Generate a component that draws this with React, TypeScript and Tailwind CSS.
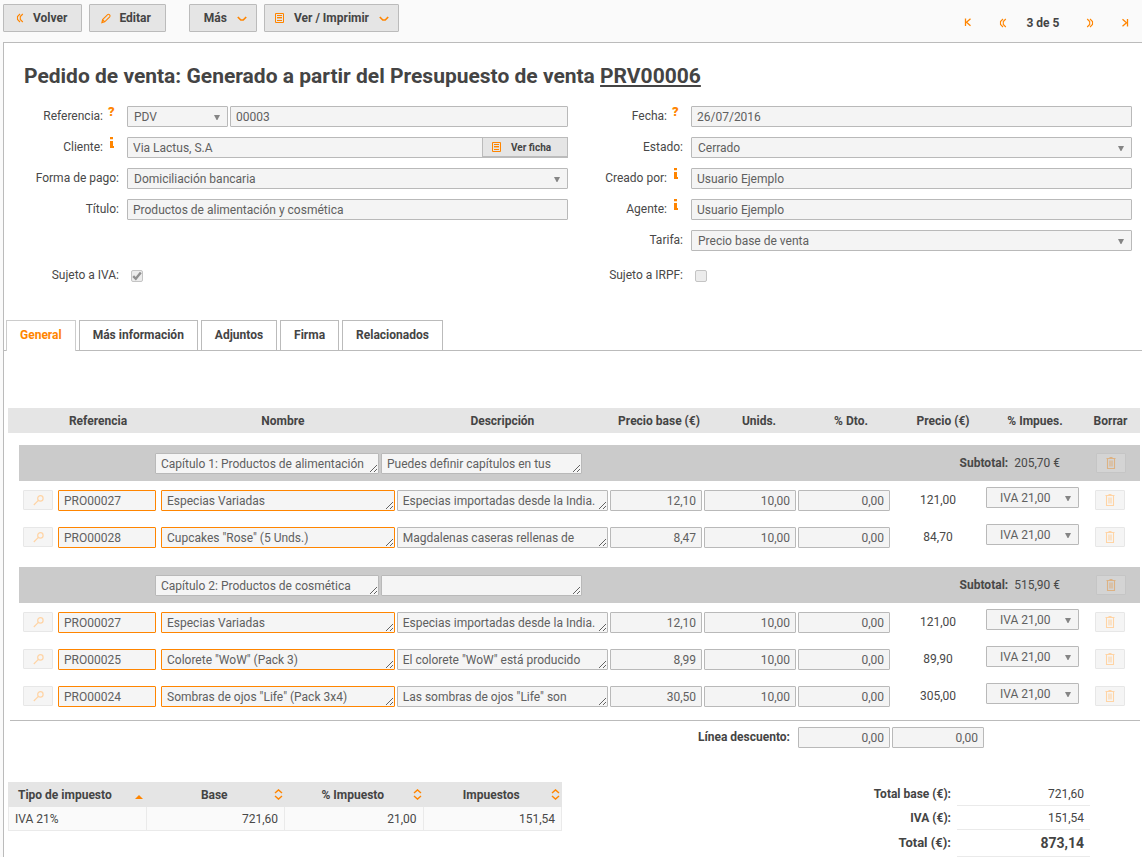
import type { ReactNode } from 'react';

const field =
  'h-[21px] min-w-0 rounded-[1px] border border-[#b9b9b9] bg-[#f4f4f4] text-[12px] leading-[19px] text-[#606060] outline-none';
const area =
  'block h-[21px] min-h-[21px] overflow-hidden rounded-[1px] border bg-[#f5f5f5] px-[5px] pt-px pb-0 text-[12px] leading-[19px] whitespace-nowrap text-[#606060] outline-none resize';
const toolButton =
  'flex h-7 items-center rounded-[1px] border border-[#bbb] bg-[#e5e5e5] text-[12px] font-bold text-[#444]';

function DoubleChevron({ flip = false }: { flip?: boolean }) {
  return (
    <svg
      width="8"
      height="10"
      viewBox="0 0 8 10"
      className={flip ? 'rotate-180' : ''}
      fill="none"
      stroke="#ff8500"
      strokeWidth="1.1"
    >
      <path d="M4 1 L1.5 3.5 V6.5 L4 9 M6.8 1 L4.3 3.5 V6.5 L6.8 9" />
    </svg>
  );
}

function EndChevron({ flip = false }: { flip?: boolean }) {
  return (
    <svg
      width="8"
      height="9"
      viewBox="0 0 8 9"
      className={flip ? 'rotate-180' : ''}
      fill="none"
      stroke="#ff8500"
      strokeWidth="1.3"
    >
      <path d="M1.5 0.5 V8 M6.5 0.8 L2.5 4.3 L6.5 7.8" />
    </svg>
  );
}

function ChevronDown() {
  return (
    <svg width="10" height="6" viewBox="0 0 10 6" fill="none" stroke="#ff8500" strokeWidth="1.7" className="mt-0.5">
      <path d="M0.8 1 L3.8 4 H6.2 L9.2 1" />
    </svg>
  );
}

function Pencil() {
  return (
    <svg width="10" height="11" viewBox="0 0 10 11" fill="none" stroke="#ff8500" strokeWidth="1.1">
      <path d="M0.9 9.6 L1.6 6.6 L6.6 1.6 Q7.6 0.9 8.6 1.8 Q9.4 2.8 8.7 3.8 L3.7 8.8 Z M1.8 6.8 L3.6 8.6" />
    </svg>
  );
}

function Sheet() {
  return (
    <svg width="9" height="10" viewBox="0 0 9 10" fill="none" stroke="#ff8500">
      <path d="M0.5 0.5 H8.5 V9.5 H0.5 Z M2 2.5 H7 M2 4.5 H7 M2 7.5 H7" />
      <path d="M2 5.5 H7" strokeOpacity="0.4" />
    </svg>
  );
}

function Magnifier() {
  return (
    <svg width="11" height="11" viewBox="0 0 11 11" fill="none" stroke="#ff8500" strokeWidth="1.2">
      <circle cx="7.4" cy="3.4" r="2.7" />
      <path d="M5.4 5.4 L0.8 10" />
    </svg>
  );
}

function Trash() {
  return (
    <svg width="10" height="12" viewBox="0 0 10 12" fill="none" stroke="#ff8500" strokeWidth="1.1">
      <path d="M0.5 1.5 H9.5 M3.5 0.5 H6.5 M1.5 2 V11.5 H8.5 V2 M4 3.5 V9.5 M6 3.5 V9.5" />
    </svg>
  );
}

function SortBoth() {
  return (
    <svg width="9" height="11" viewBox="0 0 9 11" fill="none" stroke="#ff8500" strokeWidth="1.4">
      <path d="M1 4 L4.5 0.9 L8 4 M1 7 L4.5 10.1 L8 7" />
    </svg>
  );
}

function SortUp() {
  return (
    <svg width="8" height="4" viewBox="0 0 8 4" fill="#ff8500" className="mt-1">
      <path d="M0 4 L4 0 L8 4 Z" />
    </svg>
  );
}

function Hint({ kind }: { kind: 'help' | 'info' }) {
  if (kind === 'help') {
    return (
      <span className="-mt-0.5 w-4 shrink-0 pl-[5px] text-[13px] leading-[15px] font-black text-[#ff8500]">?</span>
    );
  }
  return (
    <svg width="16" height="11" viewBox="0 0 16 11" fill="#ff8500" className="shrink-0">
      <path d="M7 0 H10 V2.2 H7 Z M7 4 H10 V9 H11 V11 H7 Z" />
    </svg>
  );
}

type DropProps = { id?: string; label?: string; value: string; className?: string; pad?: string };

function Drop({ id, label, value, className = '', pad = 'pl-1.5' }: DropProps) {
  return (
    <div className={`relative ${className}`}>
      <select
        id={id}
        aria-label={label}
        defaultValue={value}
        className={`${field} ${pad} block w-full appearance-none pt-px pr-5`}
      >
        <option>{value}</option>
      </select>
      <svg
        width="6"
        height="6"
        viewBox="0 0 6 6"
        fill="#858585"
        className="pointer-events-none absolute top-[9px] right-2"
      >
        <path d="M0 0 H6 L3.4 5 H2.6 Z" />
      </svg>
    </div>
  );
}

type RowProps = { id: string; label: string; hint?: 'help' | 'info'; className?: string; children: ReactNode };

function Row({ id, label, hint, className = '', children }: RowProps) {
  return (
    <div className={`flex h-[21px] gap-2 ${className}`}>
      <div className="flex w-[115px] shrink-0 justify-end">
        <label htmlFor={id} className="text-[12px] leading-[21px] whitespace-nowrap text-[#484848]">
          {label}
        </label>
        {hint && <Hint kind={hint} />}
      </div>
      <div className="flex min-w-0 flex-1">{children}</div>
    </div>
  );
}

function TextField({ id, value }: { id: string; value: string }) {
  return <input id={id} readOnly defaultValue={value} className={`${field} w-full flex-1 px-[5px]`} />;
}

function Tick({ id, checked = false }: { id: string; checked?: boolean }) {
  return (
    <span className="ml-1 grid place-items-center self-center">
      <input
        id={id}
        type="checkbox"
        defaultChecked={checked}
        className="col-start-1 row-start-1 h-3 w-3 appearance-none rounded-[2px] border border-[#c4c4c4] bg-[#ececec]"
      />
      {checked && (
        <svg
          width="10"
          height="10"
          viewBox="0 0 10 10"
          fill="none"
          stroke="#909090"
          strokeWidth="2.4"
          className="pointer-events-none col-start-1 row-start-1"
        >
          <path d="M1.2 5.2 L3.8 7.8 L8.8 1.6" />
        </svg>
      )}
    </span>
  );
}

function SmallButton({ label, children }: { label: string; children: ReactNode }) {
  return (
    <button
      type="button"
      disabled
      aria-label={label}
      className="flex h-5 w-[30px] items-center justify-center rounded-[1px] border border-[#bbb] bg-[#e5e5e5] opacity-35"
    >
      {children}
    </button>
  );
}

type Line = { ref: string; name: string; text: string; base: string; units: string; price: string };
type Chapter = { name: string; text: string; subtotal: string; lines: Line[] };

const chapters: Chapter[] = [
  {
    name: 'Capítulo 1: Productos de alimentación',
    text: 'Puedes definir capítulos en tus',
    subtotal: '205,70 €',
    lines: [
      { ref: 'PRO00027', name: 'Especias Variadas', text: 'Especias importadas desde la India.', base: '12,10', units: '10,00', price: '121,00' },
      { ref: 'PRO00028', name: 'Cupcakes "Rose" (5 Unds.)', text: 'Magdalenas caseras rellenas de', base: '8,47', units: '10,00', price: '84,70' },
    ],
  },
  {
    name: 'Capítulo 2: Productos de cosmética',
    text: '',
    subtotal: '515,90 €',
    lines: [
      { ref: 'PRO00027', name: 'Especias Variadas', text: 'Especias importadas desde la India.', base: '12,10', units: '10,00', price: '121,00' },
      { ref: 'PRO00025', name: 'Colorete "WoW" (Pack 3)', text: 'El colorete "WoW" está producido', base: '8,99', units: '10,00', price: '89,90' },
      { ref: 'PRO00024', name: 'Sombras de ojos "Life" (Pack 3x4)', text: 'Las sombras de ojos "Life" son', base: '30,50', units: '10,00', price: '305,00' },
    ],
  },
];

function NumberCell({ label, value }: { label: string; value: string }) {
  return (
    <td className="px-px pt-[9px]">
      <input readOnly aria-label={label} defaultValue={value} className={`${field} block w-full px-[5px] text-right`} />
    </td>
  );
}

function ChapterRows({ chapter }: { chapter: Chapter }) {
  return (
    <tbody className="align-top">
      <tr>
        <td colSpan={10} className="pt-3 pl-[11px]">
          <div className="flex h-9 items-center bg-[#cbcbcb] pr-3.5 pl-[136px]">
            <textarea readOnly rows={1} aria-label="Capítulo" defaultValue={chapter.name} className={`${area} w-56 border-[#b9b9b9]`} />
            <textarea readOnly rows={1} aria-label="Descripción del capítulo" defaultValue={chapter.text} className={`${area} ml-0.5 w-[201px] border-[#b9b9b9]`} />
            <p className="mr-9 ml-auto flex gap-1.5 text-[12px] text-[#484848]">
              <b>Subtotal:</b>
              <span>{chapter.subtotal}</span>
            </p>
            <SmallButton label="Borrar capítulo">
              <Trash />
            </SmallButton>
          </div>
        </td>
      </tr>
      {chapter.lines.map((line) => (
        <tr key={line.ref} className="h-[37px]">
          <td className="pt-[9px] pl-[15px]">
            <SmallButton label="Buscar producto">
              <Magnifier />
            </SmallButton>
          </td>
          <td className="px-0.5 pt-[9px]">
            <input readOnly aria-label="Referencia" defaultValue={line.ref} className="block h-[21px] w-full rounded-[1px] border border-[#ff8500] bg-[#f5f5f5] px-[5px] text-[12px] leading-[19px] text-[#606060] outline-none" />
          </td>
          <td className="pt-[9px] pr-px pl-[3px]">
            <textarea readOnly rows={1} aria-label="Nombre" defaultValue={line.name} className={`${area} w-full border-[#ff8500]`} />
          </td>
          <td className="px-px pt-[9px]">
            <textarea readOnly rows={1} aria-label="Descripción" defaultValue={line.text} className={`${area} w-full border-[#b9b9b9]`} />
          </td>
          <NumberCell label="Precio base" value={line.base} />
          <NumberCell label="Unidades" value={line.units} />
          <NumberCell label="Descuento" value="0,00" />
          <td className="pt-[9px] text-center leading-[21px] text-[#484848]">{line.price}</td>
          <td className="pt-1.5 pr-0.5 pl-px">
            <Drop label="Impuesto" value="IVA 21,00" pad="pl-[13px]" />
          </td>
          <td className="pt-[9px] pl-3.5">
            <SmallButton label="Borrar línea">
              <Trash />
            </SmallButton>
          </td>
        </tr>
      ))}
    </tbody>
  );
}

const tabs = ['General', 'Más información', 'Adjuntos', 'Firma', 'Relacionados'];

const headings: [string, string][] = [
  ['', ''],
  ['Referencia', 'pr-[18px]'],
  ['Nombre', 'pl-3'],
  ['Descripción', ''],
  ['Precio base (€)', 'pl-1.5'],
  ['Unids.', 'pl-[18px]'],
  ['% Dto.', 'pl-3.5'],
  ['Precio (€)', 'pl-2.5'],
  ['% Impues.', 'pl-1'],
  ['Borrar', ''],
];

export default function App() {
  return (
    <div className="flex min-h-screen flex-col bg-[#fafafa] pl-[3px] font-[Roboto,sans-serif] text-[12px] text-[#444]">
      <header className="flex h-[42px] items-start justify-between">
        <div className="flex pt-1">
          <button type="button" className={`${toolButton} gap-[9px] pr-3.5 pl-3`}>
            <DoubleChevron />
            Volver
          </button>
          <button type="button" className={`${toolButton} ml-[7px] gap-2 pr-3.5 pl-[11px]`}>
            <Pencil />
            Editar
          </button>
          <button type="button" className={`${toolButton} ml-[23px] gap-2.5 pr-[9px] pl-3.5`}>
            Más
            <ChevronDown />
          </button>
          <button type="button" className={`${toolButton} ml-[7px] gap-2.5 pr-[9px] pl-2.5`}>
            <Sheet />
            Ver / Imprimir
            <ChevronDown />
          </button>
        </div>
        <nav className="flex h-[45px] items-center">
          <button type="button" aria-label="Primero" className="flex w-[35px] justify-center">
            <EndChevron />
          </button>
          <button type="button" aria-label="Anterior" className="flex w-[35px] justify-center">
            <DoubleChevron />
          </button>
          <span className="w-[52px] pr-1.5 text-center font-bold">3 de 5</span>
          <button type="button" aria-label="Siguiente" className="flex w-[35px] justify-center">
            <DoubleChevron flip />
          </button>
          <button type="button" aria-label="Último" className="flex w-[35px] justify-center">
            <EndChevron flip />
          </button>
        </nav>
      </header>

      <main className="flex-1 border-t border-l border-[#bbb] bg-white">
        <h1 className="pt-[19px] pl-5 text-[21px] leading-7 font-bold">
          Pedido de venta: Generado a partir del Presupuesto de venta{' '}
          <a href="#PRV00006" className="underline decoration-2 underline-offset-2">
            PRV00006
          </a>
        </h1>

        <form className="mt-4 grid grid-cols-2 gap-y-2.5 pr-2.5">
          <Row id="referencia" label="Referencia:" hint="help">
            <Drop label="Serie" value="PDV" className="mr-0.5 w-[101px] shrink-0" />
            <TextField id="referencia" value="00003" />
          </Row>
          <Row id="fecha" label="Fecha:" hint="help">
            <TextField id="fecha" value="26/07/2016" />
          </Row>
          <Row id="cliente" label="Cliente:" hint="info">
            <TextField id="cliente" value="Via Lactus, S.A" />
            <button
              type="button"
              className="-ml-px flex h-[21px] w-[86px] items-center gap-2.5 border border-b-2 border-[#bbb] bg-[#e5e5e5] pl-[9px] text-[10px] font-bold"
            >
              <Sheet />
              Ver ficha
            </button>
          </Row>
          <Row id="estado" label="Estado:">
            <Drop id="estado" value="Cerrado" className="w-full" />
          </Row>
          <Row id="pago" label="Forma de pago:">
            <Drop id="pago" value="Domiciliación bancaria" className="w-full" />
          </Row>
          <Row id="creado" label="Creado por:" hint="info">
            <TextField id="creado" value="Usuario Ejemplo" />
          </Row>
          <Row id="titulo" label="Título:">
            <TextField id="titulo" value="Productos de alimentación y cosmética" />
          </Row>
          <Row id="agente" label="Agente:" hint="info">
            <TextField id="agente" value="Usuario Ejemplo" />
          </Row>
          <Row id="tarifa" label="Tarifa:" className="col-start-2">
            <Drop id="tarifa" value="Precio base de venta" className="w-full" />
          </Row>
          <Row id="iva" label="Sujeto a IVA:" className="mt-1">
            <Tick id="iva" checked />
          </Row>
          <Row id="irpf" label="Sujeto a IRPF:" className="mt-1">
            <Tick id="irpf" />
          </Row>
        </form>

        <div role="tablist" className="mt-[34px] flex gap-[3px] border-b border-[#bbb] pl-0.5">
          {tabs.map((tab, i) => (
            <button
              key={tab}
              type="button"
              role="tab"
              aria-selected={i === 0}
              className={
                i === 0
                  ? '-mb-px h-[31px] border border-b-0 border-[#ccc] bg-white px-[13px] pb-0.5 font-bold text-[#ff8500]'
                  : 'h-[30px] border border-b-0 border-[#bbb] bg-white px-[13px] pb-px font-bold'
              }
            >
              {tab}
            </button>
          ))}
        </div>

        <section className="pt-[57px] pr-0.5 pl-1">
          <table className="w-full table-fixed border-collapse">
            <colgroup>
              <col className="w-12" />
              <col className="w-[102px]" />
              <col className="w-[21%]" />
              <col />
              <col className="w-[94px]" />
              <col className="w-[94px]" />
              <col className="w-[94px]" />
              <col className="w-[94px]" />
              <col className="w-24" />
              <col className="w-[59px]" />
            </colgroup>
            <thead>
              <tr className="h-[25px] bg-[#e5e5e5]">
                {headings.map(([title, pad]) => (
                  <th key={title} className={`whitespace-nowrap ${pad}`}>
                    {title}
                  </th>
                ))}
              </tr>
            </thead>
            {chapters.map((chapter) => (
              <ChapterRows key={chapter.name} chapter={chapter} />
            ))}
          </table>

          <div className="mt-1.5 ml-0.5 flex gap-0.5 border-t border-[#bbb] pt-1.5 pr-[156px]">
            <label htmlFor="descuento" className="mr-1.5 ml-auto leading-5 font-bold">
              Línea descuento:
            </label>
            <input id="descuento" readOnly defaultValue="0,00" className={`${field} w-[92px] px-[5px] text-right`} />
            <input
              aria-label="Importe del descuento"
              readOnly
              defaultValue="0,00"
              className={`${field} w-[92px] px-[5px] text-right`}
            />
          </div>
        </section>

        <section className="mt-[34px] flex items-start justify-between pr-[52px] pl-1">
          <table className="w-[554px] table-fixed border-separate border-spacing-0">
            <thead>
              <tr className="h-[25px] bg-[#e5e5e5]">
                {['Tipo de impuesto', 'Base', '% Impuesto', 'Impuestos'].map((title, i) => (
                  <th key={title}>
                    <div className="flex items-center pr-0.5">
                      <span className={i === 0 ? 'flex-1 pl-2.5 text-left' : 'flex-1 pl-2'}>{title}</span>
                      {i === 0 ? (
                        <span className="pr-0.5">
                          <SortUp />
                        </span>
                      ) : (
                        <SortBoth />
                      )}
                    </div>
                  </th>
                ))}
              </tr>
            </thead>
            <tbody>
              <tr className="h-6 bg-[#fafafa] text-[#484848]">
                <td className="border-r border-b border-l border-[#eaeaea] px-1.5">IVA 21%</td>
                <td className="border-r border-b border-[#eaeaea] px-1.5 text-right">721,60</td>
                <td className="border-r border-b border-[#eaeaea] px-1.5 text-right">21,00</td>
                <td className="border-r border-b border-[#eaeaea] px-1.5 text-right">151,54</td>
              </tr>
            </tbody>
          </table>

          <dl className="grid grid-cols-[auto_133px] gap-x-1.5 text-right">
            <dt className="leading-6 font-bold">Total base (€):</dt>
            <dd className="h-6 border-b border-[#eaeaea] pr-1.5 leading-6">721,60</dd>
            <dt className="leading-6 font-bold">IVA (€):</dt>
            <dd className="h-6 border-b border-[#eaeaea] pr-1.5 leading-6">151,54</dd>
            <dt className="text-[13px] leading-[26px] font-bold">Total (€):</dt>
            <dd className="h-[27px] border-b border-[#eaeaea] pr-1.5 text-[14px] leading-[27px] font-bold">873,14</dd>
          </dl>
        </section>
      </main>
    </div>
  );
}
